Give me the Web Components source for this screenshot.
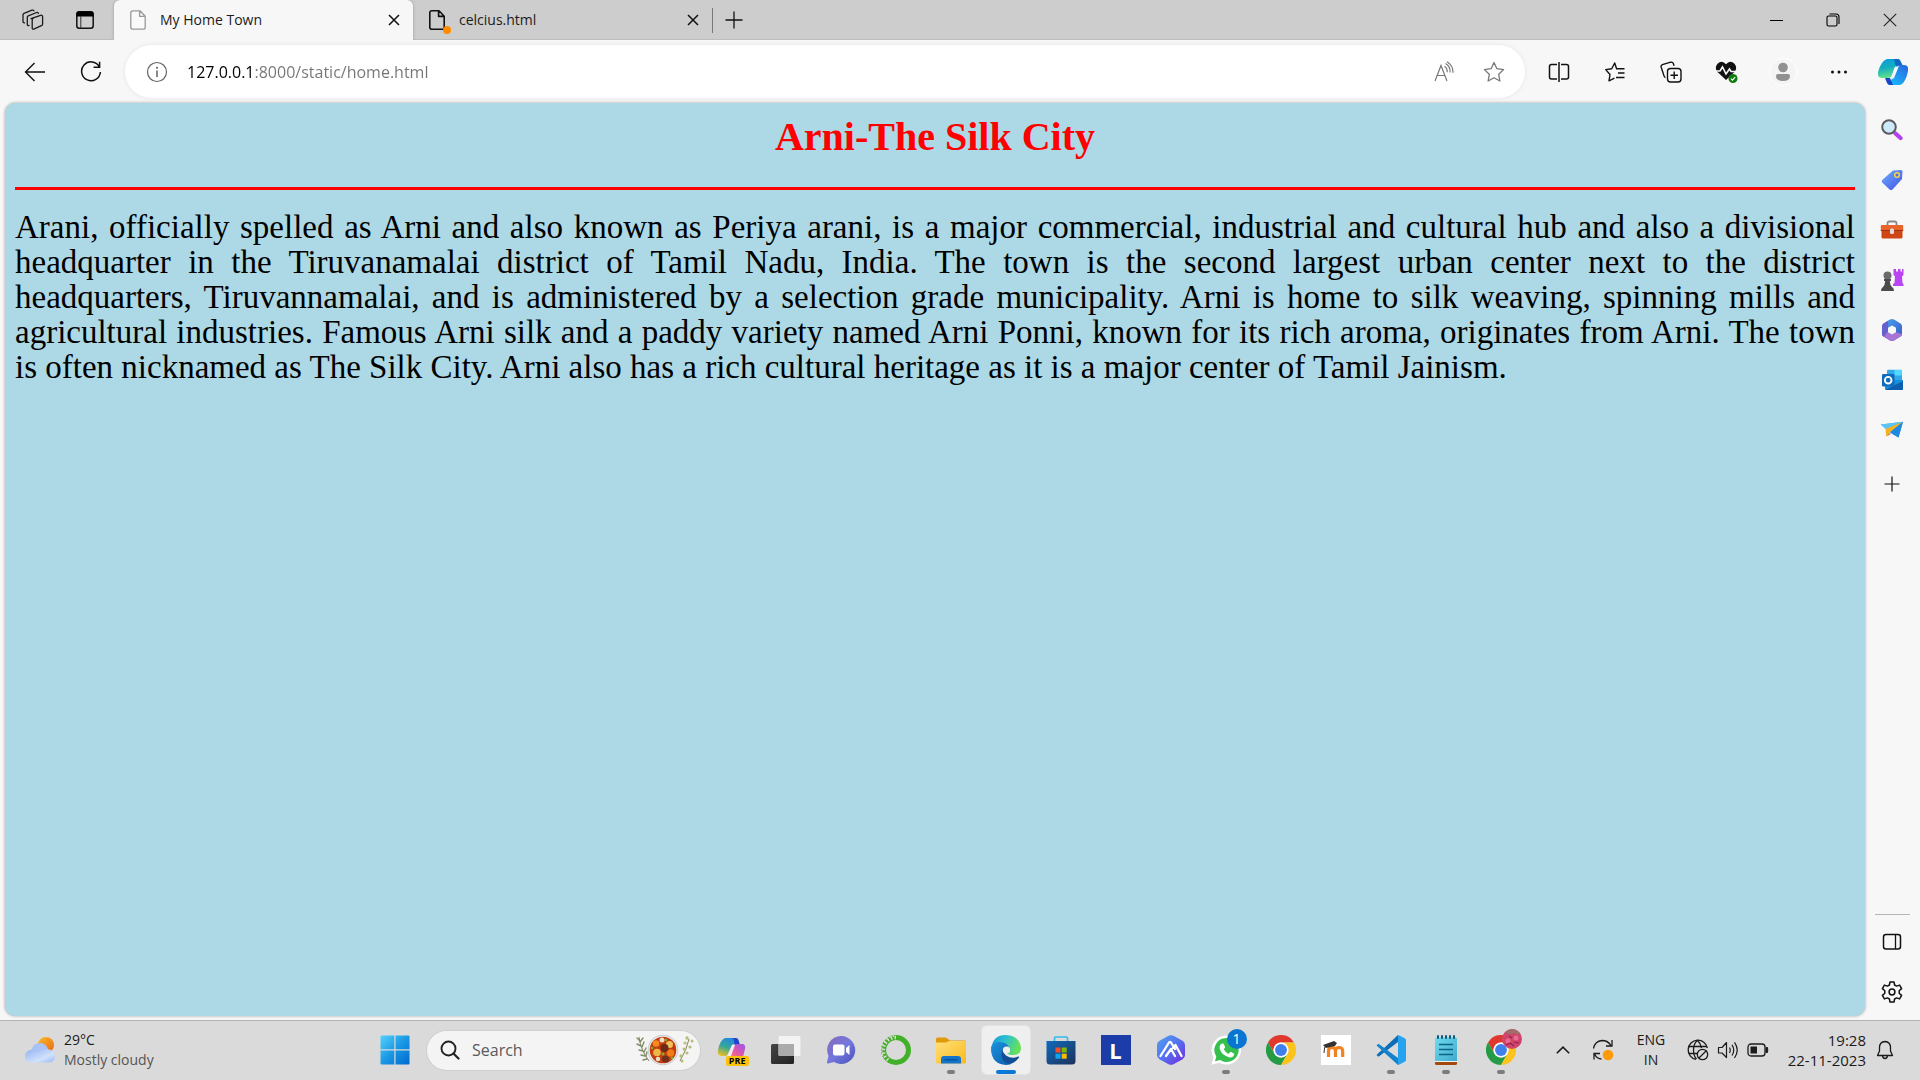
<!DOCTYPE html>
<html lang="en">
<head>
<meta charset="utf-8">
<title>My Home Town</title>
<style>
  html, body { margin: 0; height: 100%; }
  body { font-family: "Open Sans", "Noto Sans", sans-serif; font-size: 14px; color: #1b1b1b; background: #f7f7f7; }
</style>
</head>
<body>
<desktop-screen></desktop-screen>
<script>
const ICONS = {
  workspaces: [22, 22, `<g fill="none" stroke="#1b1b1b" stroke-width="1.3" stroke-linejoin="round" stroke-linecap="round"><path d="M9 9.6 18.6 6.300q2-.5 2 1.500V15q0 1.200-1.200 1.700l-7.600 3.400q-1.600.5-1.600-1.200V11q0-1.100 1-1.500"/><path d="M7 16.500q-1.700.4-1.700-1.200V8.300q0-1.100 1-1.500l8.300-3.300q1.500-.4 1.800.8"/><path d="M2.600 13.800Q1 14 1 12.500V6q0-1.200 1-1.600L10 1.200q1.400-.4 1.900.6"/></g>`],
  tabactions: [18, 18, `<rect x=".8" y=".8" width="16.400" height="16.400" rx="2.500" fill="none" stroke="#111" stroke-width="1.500"/><path d="M.5 5.500V3A2.500 2.500 0 0 1 3 .5h12A2.500 2.500 0 0 1 17.500 3v2.500z" fill="#000"/><path d="M4.800 5v12" stroke="#333" stroke-width="1"/>`],
  page: [16, 20, `<path d="M3 .8h7l5.200 5.400v11q0 2-2 2H3q-2.200 0-2.200-2v-14.200Q.8.800 3 .8zM9.600 1v5.400h5.400" fill="#fafafa" stroke="#999" stroke-width="1.300" stroke-linejoin="round"/>`],
  pagedot: [24, 32, `<path d="M3 6.800h7l5.200 5.400v11q0 2-2 2H3q-2.200 0-2.200-2v-14.200Q.8 6.800 3 6.800zM9.600 7v5.400h5.400" fill="none" stroke="#111" stroke-width="1.600" stroke-linejoin="round"/><circle cx="18" cy="26" r="4" fill="#ff8c00"/>`],
  close: [12, 12, `<path d="m1 1 10 10M11 1 1 11" stroke="#111" stroke-width="1.500"/>`],
  plus: [18, 18, `<path d="M9 .5v17M.5 9h17" stroke="#111" stroke-width="1.300"/>`],
  minimise: [14, 14, `<path d="M1 7.500h13" stroke="#000" stroke-width="1"/>`],
  restore: [14, 14, `<rect x="1" y="3" width="10" height="10" rx="1.500" fill="none" stroke="#000" stroke-width="1.100"/><path d="M3.500 1h6.500q3 0 3 3v7" fill="none" stroke="#000" stroke-width="1.100"/>`],
  winclose: [14, 14, `<path d="m.8.800 12.400 12.400M13.200.800.8 13.200" stroke="#222" stroke-width="1.100"/>`],
  back: [22, 20, `<path d="M21 10H1.500M10.500 1 1.500 10l9 9" fill="none" stroke="#111" stroke-width="1.400"/>`],
  reload: [22, 22, `<path d="M19.200 5.600A9.400 9.400 0 1 0 20.400 11M19.600.8v5.400h-6" fill="none" stroke="#111" stroke-width="1.500"/>`],
  info: [22, 22, `<circle cx="11" cy="11" r="9.500" fill="none" stroke="#666" stroke-width="1.200"/><path d="M11 9.500v6.500" stroke="#555" stroke-width="1.400"/><circle cx="11" cy="6.800" r="1" fill="#555"/>`],
  readaloud: [22, 22, `<g fill="none" stroke="#777" stroke-width="1.200"><path d="m2 20 6-15.500L14 20M4.300 14.500h7.500M11.500 5.200q3 1.800 2.700 6M12.500 2.500q5 2.800 4.600 9M14 .8q6.200 3.600 6 11"/></g>`],
  star: [22, 22, `<path d="m11 1.500 2.900 6.200 6.700.9-4.900 4.700 1.200 6.700L11 16.800 5.100 20l1.200-6.700L1.400 8.600l6.700-.9z" fill="none" stroke="#777" stroke-width="1.300" stroke-linejoin="round"/>`],
  split: [22, 22, `<path d="M9 3.500H3.500q-2 0-2 2v10.500q0 2 2 2H9M13 3.500h5.500q2 0 2 2v10.500q0 2-2 2H13M11 1v20" fill="none" stroke="#111" stroke-width="1.500"/>`],
  favourites: [22, 22, `<path d="M12 7.700h8.500M14 12h6.500M12 16.500h8.500" stroke="#111" stroke-width="1.500"/><path d="m12.500 7.500-1.800-5.500-3 5.800-6 .8L6 13.500l-1 6.300 5.500-2.600" fill="none" stroke="#111" stroke-width="1.400" stroke-linejoin="round"/>`],
  collections: [22, 22, `<g fill="none" stroke="#111" stroke-width="1.400"><path d="M5.500 16.500q-1-.2-1.400-1.400L1.200 6.300q-.6-2 1.200-2.600l8.300-2.500q1.900-.5 2.600 1.200l.8 2.300"/><rect x="7.500" y="7.500" width="13.500" height="13.500" rx="3"/><path d="M14.200 10.500v7.500M10.500 14.200h7.500"/></g>`],
  heart: [24, 24, `<path d="M11 20 2 11.500Q-.5 7.500 2.500 3.800 7-.5 11 4.300q4-4.800 8.500-.500 3 3.700.5 7.700z" fill="#111"/><path d="M0 11h5l2.500-4 3.500 7 3.500-5 1.500 2.500h5.500" fill="none" stroke="#f7f7f7" stroke-width="1.600"/><circle cx="18" cy="18.500" r="4.500" fill="#107c10"/><path d="m16 18.700 1.400 1.400 2.800-3" fill="none" stroke="#fff" stroke-width="1.200"/>`],
  profile: [28, 28, `<circle cx="14" cy="14" r="13.500" fill="#f4f4f4" stroke="#fff"/><circle cx="14" cy="9.500" r="4.800" fill="#919191"/><path d="M7 18q0-2 2-2h10q2 0 2 2 0 5-7 5t-7-5z" fill="#919191"/>`],
  more: [18, 6, `<g fill="#111"><circle cx="2.500" cy="3" r="1.500"/><circle cx="9" cy="3" r="1.500"/><circle cx="15.500" cy="3" r="1.500"/></g>`],
  copilot: [30, 28, `<defs><linearGradient id="a" x2=".2" y2="1"><stop stop-color="#0a9be0"/><stop offset=".5" stop-color="#14aebe"/><stop offset="1" stop-color="#5fe08e"/></linearGradient><linearGradient id="b" x1="1" x2=".2" y2="1"><stop stop-color="#2b63e0"/><stop offset="1" stop-color="#19b9f8"/></linearGradient></defs><path d="M9 1h11l4 7h-5q-2 0-3 3l-2 6q-1 3-4 3H4q-5 0-4-6Q3 3 9 1z" fill="url(#a)"/><path d="M14 1h6q2 0 2.500 2L25 8h-6q-2 0-2-3 0-4-3-4z" fill="#1267c2"/><path d="M21 7h5q5 0 4 6-2 10-6 13-1 1-3 1H10q2-1 3-4l4-12q1-4 4-4z" fill="url(#b)"/><path d="m17 9 4-1-5 12q-1 1-3 1z" fill="#f2fafd"/><path d="M7 20h5l3 7h-3q-2 0-3-2z" fill="#1747c4"/>`],
  sidesearch: [22, 22, `<path d="m12.500 12.500 3 3" stroke="#777" stroke-width="2"/><path d="m14.500 14.500 5 4.500" stroke="#b43ff0" stroke-width="4.200" stroke-linecap="round"/><circle cx="8" cy="8" r="6.800" fill="#cdeafa" stroke="#5b5b60" stroke-width="2"/>`],
  tag: [22, 22, `<defs><linearGradient id="a" x2="1" y2="1"><stop stop-color="#6db0fb"/><stop offset="1" stop-color="#4250e8"/></linearGradient></defs><path d="M12 1.500 20 1q1.500 0 1.500 1.500L21 10 11.500 20.500q-1.500 1.200-3 0L1.200 13.500q-1-1.500 0-2.500z" fill="url(#a)"/><circle cx="16" cy="6" r="2.300" fill="#4d6dde" stroke="#f7d24a" stroke-width="1.500"/>`],
  toolbox: [24, 20, `<path d="M7.500 6V3.200Q7.500 1.500 9.200 1.500h5.600q1.700 0 1.700 1.700V6" fill="none" stroke="#8a8a8a" stroke-width="1.800"/><path d="M1.500 8v9q0 1.500 1.500 1.500h18q1.500 0 1.500-1.500V8z" fill="#cf4516"/><path d="M.8 6q0-1 1-1h20.400q1 0 1 1v5H.8z" fill="#e8642a"/><path d="M.8 10.500h22.400" stroke="#a03410"/><rect x="10" y="8.500" width="4" height="5.500" rx="1.500" fill="#ddd"/>`],
  games: [24, 24, `<path d="M14 1h2v2.500h2V1h2.500v2.500H22V1h1.500v6L22 8.500l.5 6.500 1 1v2H13v-2l1.500-1 .5-6.500L13.500 7V1z" fill="#b945f2"/><circle cx="7.500" cy="7.500" r="4" fill="#6b6b6b"/><path d="M4 11h7v2H9.800q.2 4 2.200 6 2 1 2 4H1q0-3 2-4 2-2 2.200-6H4z" fill="#4b4b4b"/>`],
  m365: [22, 24, `<defs><linearGradient id="a" y2="1"><stop stop-color="#4aa8ee"/><stop offset="1" stop-color="#3a53c8"/></linearGradient></defs><path d="M11 1q1 0 2 .6l6.500 3.800q1.500 1 1.500 2.600v8q0 1.600-1.500 2.600L13 22.400q-2 1-4 0l-6.500-3.800Q1 17.600 1 16V8q0-1.600 1.500-2.600L9 1.600q1-.6 2-.6z" fill="url(#a)"/><path d="m1 9 .1 7.500q.3 1.300 1.400 2.100L9 22.400q2 1 4 0l6.500-3.800q1.500-1 1.500-2.600l-7-2-3 2.500-5-2.500z" fill="#a875d6"/><path d="M11 1Q9 1 7 3v10l-4 5.800-.5-.2Q1 17.600 1 16V8q0-1.600 1.500-2.600L9 1.600z" fill="#6461cf"/><path d="m11 7.500 4 2.200v4.600l-4 2.200-4-2.200V9.700z" fill="#f7f7f7"/>`],
  outlook: [22, 22, `<path d="M6 2q0-1.200 1.200-1.200h12.600Q21 .8 21 2v10H6z" fill="#32a9e7"/><path d="M13.500 1h7.300v5.500h-7.300z" fill="#50d9ff"/><path d="M4 11h18v8.500q0 1.500-1.500 1.500h-15Q4 21 4 19.500z" fill="#1490df"/><path d="m4 21 18-9v8q0 1-1 1z" fill="#0b5fae"/><rect x="1" y="5" width="12.500" height="12.500" rx="1.300" fill="#0f6cbd"/><circle cx="7.200" cy="11.200" r="3.300" fill="none" stroke="#fff" stroke-width="1.900"/>`],
  drop: [24, 18, `<path d="M.8 3.500 23 .8 18.500 16.500l-6-3.500z" fill="#2ea4ec"/><path d="M23 .8 6 8.500.8 3.500z" fill="#5cc5f5"/><path d="M23 .8 5.500 8l.8 7.500 3-3.800z" fill="#f5b21f"/><path d="m9.300 11.700-3 3.800 4.500-2.500z" fill="#d87b18"/><path d="M23 .8 10 11.500l8.500 5z" fill="#2089e2"/>`],
  sideplus: [16, 16, `<path d="M8 .5v15M.5 8h15" stroke="#111" stroke-width="1.200"/>`],
  panel: [20, 18, `<rect x="1.500" y="1.500" width="17" height="14.500" rx="2.500" fill="none" stroke="#111" stroke-width="1.500"/><path d="M13.500 1.500V16" stroke="#111" stroke-width="1.300"/>`],
  gear: [22, 22, `<path d="M9 1h4l.6 3 2 1.100 3-1 2 3.500-2.400 2.100v2.600l2.400 2.100-2 3.500-3-1-2 1.100L13 21H9l-.6-3-2-1.100-3 1-2-3.500 2.400-2.100V9.700L1.400 7.600l2-3.500 3 1 2-1.100z" fill="none" stroke="#111" stroke-width="1.500" stroke-linejoin="round"/><circle cx="11" cy="11" r="2.900" fill="none" stroke="#111" stroke-width="1.500"/>`],
  weather: [32, 28, `<defs><linearGradient id="s" x2=".8" y2="1"><stop stop-color="#f6bd2b"/><stop offset="1" stop-color="#ee6a10"/></linearGradient><linearGradient id="c" y2="1"><stop stop-color="#8fb2f2"/><stop offset=".65" stop-color="#d2e1fb"/><stop offset="1" stop-color="#96b6f0"/></linearGradient></defs><circle cx="22" cy="9" r="8" fill="url(#s)"/><path d="M8 13q1-6 8-6 6 0 8 6l-3 8H7z" fill="#a9c3f5"/><path d="M7.500 13.500q5-.5 7.500 3 3-3.500 8-3.500 8 1 8 7 0 6-6 6.500H7q-6-.5-6-6.500 0-5 6.500-6.500z" fill="url(#c)"/>`],
  start: [30, 30, `<defs><linearGradient id="w" gradientUnits="userSpaceOnUse" x1="0" y1="0" x2="30" y2="30"><stop stop-color="#55d3ff"/><stop offset=".5" stop-color="#1a98e4"/><stop offset="1" stop-color="#0067cf"/></linearGradient></defs><path d="M.5 1.500q0-1 1-1h12.800v13.800H.5zM15.500.5h13q1 0 1 1v12.800h-14zM.5 15.500h13.800v14H1.500q-1 0-1-1zM15.500 15.500h14v13q0 1-1 1h-13z" fill="url(#w)"/>`],
  magnifier: [20, 20, `<circle cx="8.500" cy="8.500" r="7" fill="none" stroke="#222" stroke-width="1.900"/><path d="m13.500 13.500 5 5" stroke="#222" stroke-width="2.200" stroke-linecap="round"/>`],
  stew: [58, 34, `<g fill="none" stroke="#8d7a5a" stroke-width="1"><path d="M3 4q2 14 10 24M53 6q-2 10-9 22"/></g><g stroke="#7f8f6c" stroke-width="1.400" stroke-linecap="round"><path d="m4 8-3-3M4 9l3-4M5 13l-4-2M6 14l2-5M7 18l-4-1M8 19l2-4M9 23l-4-1M10 23l1-4M11 26l-4 1"/></g><g fill="#b3bf77"><circle cx="51" cy="5" r="1.700"/><circle cx="56" cy="8" r="1.500"/><circle cx="49" cy="10" r="1.500"/><circle cx="54" cy="14" r="1.600"/><circle cx="48" cy="16" r="1.500"/><circle cx="51" cy="20" r="1.500"/><circle cx="45" cy="23" r="1.700"/><circle cx="46" cy="28" r="1.500"/></g><circle cx="27" cy="17" r="15.300" fill="#c9ccd2"/><circle cx="27" cy="17" r="14.300" fill="#f1f1f1"/><circle cx="27" cy="17" r="13.300" fill="#c23d10"/><circle cx="20" cy="10.500" r="3.300" fill="#f58c1c"/><circle cx="33.500" cy="11.500" r="3.500" fill="#f0c15a"/><circle cx="21" cy="19.500" r="3.800" fill="#efb546"/><circle cx="34.500" cy="20" r="3.700" fill="#f27d17"/><circle cx="28.500" cy="15" r="4" fill="#6d2a17"/><circle cx="29.500" cy="26" r="3.600" fill="#73301a"/><circle cx="26" cy="7" r="2.500" fill="#eadfc9"/><circle cx="22" cy="26" r="2.200" fill="#eadfc9"/><g fill="#7fb22c"><circle cx="30" cy="7" r="1.300"/><circle cx="16" cy="15" r="1.300"/><circle cx="27" cy="21" r="1.500"/><circle cx="36" cy="25" r="1.300"/></g>`],
  copilotpre: [32, 30, `<defs><linearGradient id="a" x1=".6" x2=".2" y2="1"><stop stop-color="#2388e0"/><stop offset=".5" stop-color="#35a798"/><stop offset="1" stop-color="#f0c11e"/></linearGradient><linearGradient id="b" x1="1" x2=".3" y2="1"><stop stop-color="#9a54ec"/><stop offset=".6" stop-color="#e459a6"/><stop offset="1" stop-color="#ff865a"/></linearGradient></defs><g transform="translate(2 1)"><path d="M8 2h10l3 6h-4q-2 0-3 3l-2 6q-1 3-4 3H4q-4-1-3-6Q3 4 8 2z" fill="url(#a)"/><path d="M14 2h5q2 0 2.500 2L23 9h-5q-1-1-1-4 0-3-3-3z" fill="#1d49c8"/><path d="M20 8h6q3 1 2 5l-3 12H12l4-13q1-4 4-4z" fill="url(#b)"/><path d="M15 9h3l-4 11h-4z" fill="#f4e8f5"/></g>`],
  taskview: [30, 30, `<defs><linearGradient id="a" y2="1"><stop stop-color="#444"/><stop offset="1" stop-color="#222"/></linearGradient></defs><rect x="0" y="9" width="23" height="20" rx="1.500" fill="url(#a)"/><rect x="7.500" y="1" width="22" height="20" rx="1.500" fill="#f6f6f6" opacity=".88"/><path d="M7.500 9h15.500v12H9q-1.500 0-1.500-1.500z" fill="#ababab"/>`],
  chat: [30, 30, `<defs><linearGradient id="a" x2="1" y2="1"><stop stop-color="#8b68bb"/><stop offset=".5" stop-color="#7278dc"/><stop offset="1" stop-color="#4c4fbd"/></linearGradient></defs><path d="M15 1a14 14 0 1 1-7 26l-6 1.500q-1.300 0-1-1.500l1.500-6A14 14 0 0 1 15 1z" fill="url(#a)"/><rect x="7" y="9.500" width="11.500" height="11" rx="2" fill="#fff"/><path d="m20 13 3.500-3v10L20 17z" fill="#fff"/>`],
  anaconda: [30, 30, `<circle cx="15" cy="15" r="12.500" fill="none" stroke="#43b02a" stroke-width="5"/><path d="M15 2.500A12.500 12.500 0 0 0 8 25.500" fill="none" stroke="#dadada" stroke-width="3.500" stroke-dasharray="1.500 2.200"/><path d="M13 1A14 14 0 0 0 2.500 22" fill="none" stroke="#dadada" stroke-width="1.500" stroke-dasharray="1.500 2"/>`],
  folder: [30, 30, `<defs><linearGradient id="a" x2="1" y2="1"><stop stop-color="#ffe07a"/><stop offset="1" stop-color="#f9b91a"/></linearGradient></defs><path d="M0 8V4q0-1.500 1.500-1.500H10l4 3h14.500Q30 5.500 30 7v2H0z" fill="#e09a08"/><path d="M0 7.500h10l3-1.500h16q1 0 1 1v20q0 1.500-1.500 1.500h-27Q0 28.500 0 27z" fill="url(#a)"/><path d="M5 28.500V24q0-3 3-3h14q3 0 3 3v4.500z" fill="#1374cc"/><path d="M8.500 24.800h13" stroke="#0a4d92" stroke-width="1.300"/>`],
  edge: [30, 30, `<defs><linearGradient id="a" x1="0" x2="1" y2=".3"><stop stop-color="#1694dc"/><stop offset=".5" stop-color="#2cc0cf"/><stop offset="1" stop-color="#66e05a"/></linearGradient><linearGradient id="b" y2="1"><stop stop-color="#1b92db"/><stop offset="1" stop-color="#0b5cad"/></linearGradient></defs><path d="M.3 13Q2 0 15 0q14 1 15 13 0 7-8 7-5 0-6-2 3-2 1-6-5-7-16.700 1z" fill="url(#a)"/><path d="M0 15q0-8 8-8 9 0 10 6-5-2-6.500 3-1 8 5 11.500 3 2 6 .500Q19 30 15 30 1 29 0 15z" fill="url(#b)"/><path d="M11.500 14.500Q8 27 19 29q5-1 9-6.500.5-1.500-1-1-6 3-12-1-3-3-3.500-6z" fill="#124f97"/><circle cx="15.500" cy="15" r="3.600" fill="#efefef"/>`],
  store: [30, 30, `<defs><linearGradient id="a" y2="1"><stop stop-color="#0f6bbd"/><stop offset="1" stop-color="#1d3158"/></linearGradient></defs><path d="M8.500 7V3.200Q8.500 2 9.700 2h10.600q1.200 0 1.200 1.200V7" fill="none" stroke="#36bbec" stroke-width="1.700"/><path d="M.5 6h29v20q0 3.500-3.500 3.500H4Q.5 29.500.5 26z" fill="url(#a)"/><path d="M9.500 12.500h5v5h-5z" fill="#f25022"/><path d="M15.700 12.500h5v5h-5z" fill="#7fba00"/><path d="M9.500 18.700h5v5h-5z" fill="#10a6ef"/><path d="M15.700 18.700h5v5h-5z" fill="#ffb900"/>`],
  lapp: [30, 30, `<path d="M0 0h30v30H0z" fill="#1c3caa"/><path d="m11 6-3 14v4h8z" fill="#0d4a7b"/>`],
  hexapp: [30, 30, `<defs><linearGradient id="a" x2="1" y2="1"><stop stop-color="#4fa3ec"/><stop offset=".5" stop-color="#5570f0"/><stop offset="1" stop-color="#7426dd"/></linearGradient></defs><path d="M12.500.8q2.500-1.300 5 0l9 5Q29 7.200 29 10v10q0 2.800-2.500 4.200l-9 5q-2.500 1.300-5 0l-9-5Q1 22.800 1 20V10q0-2.800 2.500-4.200z" fill="url(#a)"/><path d="m4.500 21 8.500-13.500q1-1 2 0L19 14M10 21l5-7 4 7M17 13l2.500-3 6 11" fill="none" stroke="#fff" stroke-width="2.300" stroke-linejoin="round" stroke-linecap="round"/>`],
  whatsapp: [30, 30, `<path d="M15.500.5A14.500 14.500 0 1 1 8.500 27.700L.5 29.800l2-7.800A14.500 14.500 0 0 1 15.500.5z" fill="#fff"/><path d="M15.500 3A12 12 0 1 1 9 25l-5 1.300L5.300 21.500A12 12 0 0 1 15.500 3z" fill="#35c04d"/><path d="M11 8.500q1.500-.5 2 1l1 2.300q.2.800-.4 1.500l-.9 1q1.800 3.300 4.800 4.600l1.500-1.600q.5-.5 1.200-.2l2.600 1.300q.8.500.3 1.600-1.500 3-4.600 2.400-8-2-9.800-8.600-.6-4 2.300-5.300z" fill="#fff"/>`],
  chrome: [30, 30, `<g transform="scale(.625)"><path d="M24 12h20.800A24 24 0 0 0 3.200 12l10.400 18A12 12 0 0 1 24 12z" fill="#e0382c"/><path d="M3.200 12A24 24 0 0 0 24 48l10.400-18a12 12 0 0 1-20.800 0z" fill="#259b45"/><path d="M24 48a24 24 0 0 0 20.800-36H24a12 12 0 0 1 10.400 18z" fill="#fcc31d"/><circle cx="24" cy="24" r="12" fill="#fff"/><circle cx="24" cy="24" r="9.500" fill="#3f7fee"/></g>`],
  avatar: [20, 20, `<circle cx="10" cy="10" r="10" fill="#d0446c"/><path d="M3 3.500Q6 .5 10 0q6 .5 8.500 5-3 1-6-1-5 2-9.500-.5z" fill="#9a7069"/><circle cx="6" cy="12" r="2.500" fill="#ec6a90"/><circle cx="14" cy="9" r="2.500" fill="#e86b92"/><path d="m4 16 4-2 4 3M12 13l5 1M7 7l3 2" stroke="#8e2447" stroke-width="1.200" fill="none"/>`],
  moodle: [30, 30, `<path d="M0 0h30v30H0z" fill="#fff"/><path d="M7.500 22v-6q0-3.500 3.500-3.500t3.500 3.500v6m0-6q0-3.500 3.500-3.500t3.700 3.500v6" fill="none" stroke="#f58220" stroke-width="3.200"/><path d="m2 10 11-4 3 2-2 3-9 2z" fill="#333"/><path d="M5 10q-2 2-2 8" stroke="#333" fill="none"/>`],
  vscode: [30, 30, `<path d="M22 0 6.500 14.500 2.500 18 .5 20l2 1.700L22 7z" fill="#0f6db5"/><path d="M22 30 6.500 16 2.500 12.200.5 10.500l2-1.800L22 23z" fill="#1583cc"/><path d="M22 0q1 .2 7 3.500 1 .5 1 1.500v20q0 1-1 1.500-6 3.300-7 3.500z" fill="#26a3ee"/>`],
  notepad: [24, 30, `<defs><linearGradient id="a" x2="1" y2="1"><stop stop-color="#6fdcf0"/><stop offset="1" stop-color="#41a9cc"/></linearGradient></defs><path d="M1 25h22v3.500q0 1.500-1.500 1.500h-19Q1 30 1 28.500z" fill="#a5480e"/><path d="M1 25h22v2H1z" fill="#f4f4f4"/><path d="M1 4q0-1.500 1.500-1.500h19Q23 2.500 23 4v22H1z" fill="url(#a)"/><g stroke="#0d5a7c" stroke-width="2" stroke-linecap="round"><path d="M4 1v2M8 1v2M12 1v2M16 1v2M20 1v2"/></g><path d="M5 9.500h14M5 14.500h14M5 19.500h14" stroke="#0d6482" stroke-width="1.600"/>`],
  chevron: [14, 8, `<path d="m.8 7.200 6.200-6 6.200 6" fill="none" stroke="#1b1b1b" stroke-width="1.600"/>`],
  sync: [22, 22, `<path d="M1.500 9.500Q3 2 10 1.500q6 0 9 5M20 1v6h-6M2 20.500v-6h6M2.500 15q2.500 5 7 5" fill="none" stroke="#1b1b1b" stroke-width="1.300"/><circle cx="16" cy="16" r="5.300" fill="#ff9a0a"/>`],
  globe: [22, 22, `<g fill="none" stroke="#1b1b1b" stroke-width="1.300"><path d="M20.400 9A9.700 9.700 0 1 0 9 20.400"/><path d="M9.500 20q-3-3-3-9 0-6.500 4-9.500 3 2.500 4 7.500M2 7.500h17.500M2 14.500h8"/><circle cx="15.500" cy="15.500" r="5.200"/><path d="m12 19 7-7"/></g>`],
  volume: [22, 20, `<g fill="none" stroke="#1b1b1b" stroke-width="1.200" stroke-linejoin="round"><path d="M1.500 7.500v5.500h3.500l4.500 4.500v-15L5 7.500z"/><path d="M12.500 7.500q1.500 2.500 0 5.500M15 4.800q3.500 5.200 0 10.700M17.500 2.300q5.500 7.700 0 15.700"/></g>`],
  battery: [22, 14, `<rect x="1" y="1" width="17" height="12" rx="3" fill="none" stroke="#1b1b1b" stroke-width="1.300"/><path d="M3.500 3.500h6.500v7H3.500z" fill="#1b1b1b"/><path d="M19 4.500h1.500q.5 2.500 0 5H19z" fill="#1b1b1b" stroke="#1b1b1b"/>`],
  bell: [18, 20, `<path d="M9 1.500q5.500.5 5.500 6V11l2 4.500h-15L3.500 11V7.500q0-5.500 5.500-6zM6.500 16q.5 2.500 2.500 2.500t2.500-2.500" fill="none" stroke="#1b1b1b" stroke-width="1.300" stroke-linejoin="round"/>`]
};

function define(name, css, html) {
  const template = document.createElement("template");
  template.innerHTML = `<style>*{box-sizing:border-box}button{font:inherit;color:inherit;background:none;border:0;padding:0;margin:0}${css}</style>${html}`;
  customElements.define(name, class extends HTMLElement {
    constructor() {
      super();
      this.attachShadow({ mode: "open" }).append(template.content.cloneNode(true));
    }
  });
}

customElements.define("ui-icon", class extends HTMLElement {
  connectedCallback() {
    const root = this.shadowRoot || this.attachShadow({ mode: "open" });
    const [w, h, body] = ICONS[this.getAttribute("name")];
    root.innerHTML = `<style>:host{display:block;flex:none}svg{display:block}</style><svg width="${w}" height="${h}" viewBox="0 0 ${w} ${h}" aria-hidden="true">${body}</svg>`;
  }
});

customElements.define("icon-button", class extends HTMLElement {
  connectedCallback() {
    const root = this.shadowRoot || this.attachShadow({ mode: "open" });
    root.innerHTML = `<style>:host{display:flex;flex:none;width:56px;height:50px}button{flex:1;display:flex;align-items:center;justify-content:center;background:none;border:0;padding:0;margin:0}</style><button aria-label="${this.getAttribute("label")}"><ui-icon name="${this.getAttribute("icon")}"></ui-icon></button>`;
  }
});

customElements.define("task-app", class extends HTMLElement {
  connectedCallback() {
    const root = this.shadowRoot || this.attachShadow({ mode: "open" });
    root.innerHTML = `<style>
      :host{display:flex;flex:none;width:55px;height:60px;align-items:center;justify-content:center}
      button{position:relative;width:48px;height:48px;display:flex;align-items:center;justify-content:center;border:0;padding:0;border-radius:5px;background:none}
      :host([active]) button{background:#efefef;box-shadow:0 0 0 1px #e4e4e4}
      :host([running]) button::after,:host([active]) button::after{content:"";position:absolute;bottom:0;left:20px;width:8px;height:4px;border-radius:2px;background:#7c7c7c}
      :host([active]) button::after{left:14px;width:20px;background:#0a78d6}
      ::slotted(*){position:absolute}
    </style><button aria-label="${this.getAttribute("label")}"><ui-icon name="${this.getAttribute("icon")}"></ui-icon><slot></slot></button>`;
  }
});

define("browser-tab", `
  :host{display:flex;flex:none;width:299px;height:40px;align-items:center;padding:0 13px 0 16px;color:#1b1b1b}
  :host([selected]){background:#f7f7f7;border-radius:6px 6px 0 0;box-shadow:0 0 3px #999;clip-path:inset(0 -4px 0 -4px)}
  .icon{width:30px;flex:none}
  span{flex:1;font-size:14px;line-height:20px}
  button{width:12px;height:12px}`,
  `<div class="icon"><slot name="icon"></slot></div><span><slot></slot></span><button aria-label="Close tab"><ui-icon name="close"></ui-icon></button>`);

define("tab-strip", `
  :host{display:flex;flex:none;height:40px;align-items:center;background:#cdcdcd;box-shadow:inset 0 -1px 0 #bdbdbd}
  .lead{width:114px;display:flex;padding-left:7px}
  .lead icon-button{width:52px;height:40px}
  .bar{width:1px;height:25px;background:#777}
  .new{width:42px;height:40px}
  .window{margin-left:auto;padding-right:2px;display:flex}
  .window icon-button{width:57px;height:40px}`,
  `<div class="lead"><icon-button icon="workspaces" label="Workspaces"></icon-button><icon-button icon="tabactions" label="Tab actions"></icon-button></div>
   <browser-tab selected><ui-icon slot="icon" name="page"></ui-icon>My Home Town</browser-tab>
   <browser-tab><ui-icon slot="icon" name="pagedot"></ui-icon>celcius.html</browser-tab>
   <div class="bar"></div><icon-button class="new" icon="plus" label="New tab"></icon-button>
   <div class="window"><icon-button icon="minimise" label="Minimise"></icon-button><icon-button icon="restore" label="Restore"></icon-button><icon-button icon="winclose" label="Close"></icon-button></div>`);

define("tool-bar", `
  :host{display:flex;flex:none;height:63px;align-items:center;padding:0 1px 0 7px}
  form{flex:1;display:flex;align-items:center;height:53px;margin:0 6px;border-radius:27px;background:#fff;box-shadow:0 0 4px #e4e4e4;padding:0 6px 0 4px}
  form icon-button{width:50px}
  form .info{width:56px}
  input{flex:1;min-width:0;height:40px;border:0;outline:0;padding:0 0 0 2px;font:16px/24px "Open Sans","Noto Sans",sans-serif;color:#111;background:linear-gradient(90deg,#000 69px,#757575 69px);-webkit-background-clip:text;background-clip:text;-webkit-text-fill-color:transparent}
  .copilot{width:52px}`,
  `<icon-button icon="back" label="Back"></icon-button><icon-button icon="reload" label="Refresh"></icon-button>
   <form><icon-button class="info" icon="info" label="Site information"></icon-button><input type="text" aria-label="Address bar" value="127.0.0.1:8000/static/home.html"><icon-button icon="readaloud" label="Read aloud"></icon-button><icon-button icon="star" label="Add to favourites"></icon-button></form>
   <icon-button icon="split" label="Split screen"></icon-button><icon-button icon="favourites" label="Favourites"></icon-button><icon-button icon="collections" label="Collections"></icon-button><icon-button icon="heart" label="Browser essentials"></icon-button><icon-button icon="profile" label="Profile"></icon-button><icon-button icon="more" label="Settings and more"></icon-button><icon-button class="copilot" icon="copilot" label="Copilot"></icon-button>`);

define("town-page", `
  :host{display:block;flex:1;min-width:0;margin:0 0 4px 5px;padding:11px 10px;border-radius:10px;background:#add8e6;box-shadow:0 0 3px #999;color:#000}
  h1{margin:0;font:bold 40px/46px "Liberation Serif",serif;text-align:center;color:red}
  hr{margin:27px 0 20px;border:0;height:3px;background:red}
  p{margin:0;font:33px/35px Georgia,"Liberation Serif",serif;text-align:justify}`,
  `<h1>Arni-The Silk City</h1><hr><p>Arani, officially spelled as Arni and also known as Periya arani, is a major commercial, industrial and cultural hub and also a divisional headquarter in the Tiruvanamalai district of Tamil Nadu, India. The town is the second largest urban center next to the district headquarters, Tiruvannamalai, and is administered by a selection grade municipality. Arni is home to silk weaving, spinning mills and agricultural industries. Famous Arni silk and a paddy variety named Arni Ponni, known for its rich aroma, originates from Arni. The town is often nicknamed as The Silk City. Arni also has a rich cultural heritage as it is a major center of Tamil Jainism.</p>`);

define("side-bar", `
  :host{display:flex;flex:none;flex-direction:column;width:55px;padding:2px 0 3px}
  icon-button{width:54px}
  .add{margin-top:4px}
  .line{width:35px;height:1px;background:#b5b5b5;margin:auto 10px 2px}`,
  `<icon-button icon="sidesearch" label="Search"></icon-button><icon-button icon="tag" label="Shopping"></icon-button><icon-button icon="toolbox" label="Tools"></icon-button><icon-button icon="games" label="Games"></icon-button><icon-button icon="m365" label="Microsoft 365"></icon-button><icon-button icon="outlook" label="Outlook"></icon-button><icon-button icon="drop" label="Drop"></icon-button><icon-button class="add" icon="sideplus" label="Customise"></icon-button>
   <div class="line"></div><icon-button icon="panel" label="Hide sidebar"></icon-button><icon-button icon="gear" label="Settings"></icon-button>`);

define("task-bar", `
  :host{display:flex;flex:none;height:60px;align-items:center;background:#dadada;box-shadow:inset 0 1px 0 #b3b3b3;font-size:14px;line-height:20px}
  .weather{width:367px;padding-left:24px;display:flex;align-items:center;gap:8px;text-align:left}
  .weather small{display:block;font-size:14px;color:#555}
  .search{width:273px;height:39px;margin:0 3px 0 5px;display:flex;align-items:center;gap:12px;padding:0 6px 0 13px;border-radius:20px;background:#f4f4f4;box-shadow:0 0 0 1px #cfcfcf}
  .search input{flex:1;min-width:0;border:0;outline:0;background:none;padding:0;font:16px/24px "Open Sans","Noto Sans",sans-serif}
  .search input::placeholder{color:#5a5a5a}
  .pre{right:6px;bottom:8px;padding:0 3px;border-radius:2px;background:#ffc20a;color:#000;font:bold 9px/10px "Open Sans",sans-serif}
  .letter{color:#fff;font:bold 22px/30px "Open Sans",sans-serif}
  .count{right:3px;top:3px;width:20px;height:20px;border-radius:10px;background:#0a74d1;color:#fff;font:14px/20px "Open Sans",sans-serif;text-align:center}
  .face{right:3px;top:3px}
  .tray{margin-left:auto;display:flex;align-items:center;padding-right:26px}
  .tray button{display:flex;align-items:center;justify-content:center;height:48px}
  .up{width:40px}.sync{width:40px}
  .lang{width:56px;text-align:center}
  .tray .status{gap:8px;width:97px}
  .tray .clock{width:90px;justify-content:flex-end;text-align:right;font-size:15px}
  .bell{width:18px;margin-left:10px}`,
  `<button class="weather"><ui-icon name="weather"></ui-icon><span>29°C<small>Mostly cloudy</small></span></button>
   <task-app icon="start" label="Start"></task-app>
   <label class="search"><ui-icon name="magnifier"></ui-icon><input type="text" placeholder="Search" aria-label="Search"><ui-icon name="stew"></ui-icon></label>
   <task-app icon="copilotpre" label="Copilot preview"><span class="pre">PRE</span></task-app>
   <task-app icon="taskview" label="Task view"></task-app><task-app icon="chat" label="Chat"></task-app><task-app icon="anaconda" label="Anaconda"></task-app><task-app running icon="folder" label="File Explorer"></task-app><task-app active icon="edge" label="Edge"></task-app><task-app icon="store" label="Store"></task-app><task-app icon="lapp" label="L app"><span class="letter">L</span></task-app><task-app icon="hexapp" label="Assistant"></task-app>
   <task-app running icon="whatsapp" label="WhatsApp"><span class="count">1</span></task-app><task-app icon="chrome" label="Chrome"></task-app><task-app icon="moodle" label="Moodle"></task-app><task-app running icon="vscode" label="Visual Studio Code"></task-app><task-app running icon="notepad" label="Notepad"></task-app><task-app running icon="chrome" label="Chrome profile"><ui-icon class="face" name="avatar"></ui-icon></task-app>
   <div class="tray"><button class="up" aria-label="Hidden icons"><ui-icon name="chevron"></ui-icon></button><button class="sync" aria-label="Updates"><ui-icon name="sync"></ui-icon></button><button class="lang">ENG<br>IN</button><button class="status" aria-label="Quick settings"><ui-icon name="globe"></ui-icon><ui-icon name="volume"></ui-icon><ui-icon name="battery"></ui-icon></button><button class="clock">19:28<br>22-11-2023</button><button class="bell" aria-label="Notifications"><ui-icon name="bell"></ui-icon></button></div>`);

define("desktop-screen", `
  :host{display:flex;flex-direction:column;height:100vh;overflow:hidden}
  main{flex:1;min-height:0;display:flex}`,
  `<tab-strip></tab-strip><tool-bar></tool-bar><main><town-page></town-page><side-bar></side-bar></main><task-bar></task-bar>`);
</script>
</body>
</html>
